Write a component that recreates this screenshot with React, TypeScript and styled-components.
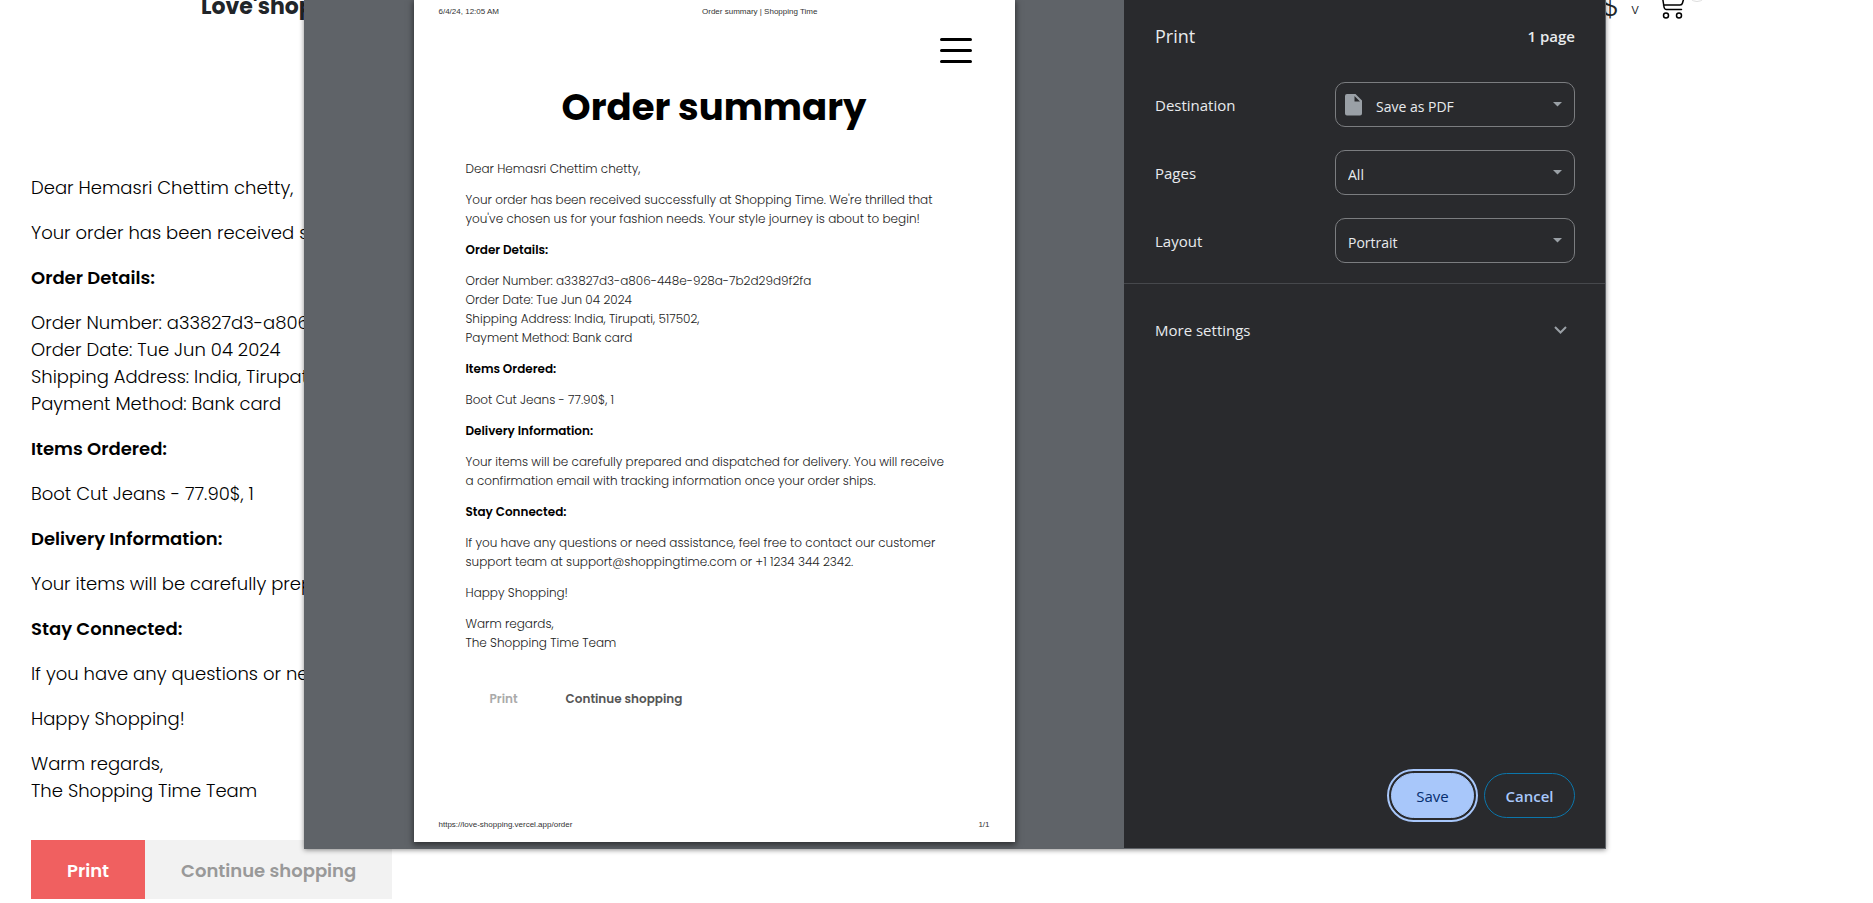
import React from 'react';
import styled, { createGlobalStyle } from 'styled-components';

const GlobalStyle = createGlobalStyle`
  *, *::before, *::after { box-sizing: border-box; }
  body {
    margin: 0;
    background: #fff;
    color: #000;
    font-family: Poppins, Inter, sans-serif;
  }
  h1, h2, p { margin: 0; }
  button, select { font: inherit; cursor: pointer; }
`;

const Page = styled.div`
  position: relative;
  min-height: 100vh;
  overflow: hidden;
`;

/* Shop page behind the dialog */

const SiteHeader = styled.header`
  display: flex;
  align-items: center;
  justify-content: space-between;
  height: 12px;
  padding: 0 186px 0 201px;
`;

const Brand = styled.a`
  color: #212529;
  font-size: 22px;
  font-weight: 700;
  text-decoration: none;
`;

const HeaderTools = styled.div`
  display: flex;
  align-items: center;
`;

const CurrencyButton = styled.button`
  display: flex;
  align-items: center;
  gap: 12px;
  padding: 0;
  border: 0;
  background: none;
  color: #212529;
  font-size: 30px;
  font-weight: 300;
`;

const CurrencyCaret = styled.span`
  padding-top: 6px;
  font-size: 14px;
`;

const CartLink = styled.a`
  position: relative;
  display: flex;
  margin-left: 22px;
  color: #000;
`;

const CartBadge = styled.span`
  position: absolute;
  left: 26px;
  bottom: 17px;
  width: 20px;
  height: 20px;
  border: 1px solid #ddd;
  border-radius: 50%;
`;

const OrderMain = styled.main`
  padding: 162px 31px 4px;
`;

const Letter = styled.div<{ $compact?: boolean }>`
  display: flex;
  flex-direction: column;
  gap: ${(p) => (p.$compact ? 12 : 18)}px;
  font-size: ${(p) => (p.$compact ? 12 : 18)}px;
  line-height: ${(p) => (p.$compact ? 19 : 27)}px;
  font-weight: 300;
  white-space: nowrap;
`;

const Strong = styled.strong`
  font-weight: 600;
`;

const Actions = styled.div`
  display: flex;
  margin-top: 36px;
`;

const ActionButton = styled.button<{ $primary?: boolean }>`
  padding: 17px 36px 15px;
  border: 0;
  background: ${(p) => (p.$primary ? '#f06060' : '#f2f2f2')};
  color: ${(p) => (p.$primary ? '#fff' : '#999')};
  font-size: 18px;
  line-height: 27px;
  font-weight: 600;
`;

/* Print dialog */

const Dialog = styled.section`
  position: absolute;
  top: 0;
  left: 304px;
  right: 267px;
  display: flex;
  background: #292a2d;
  box-shadow: 0 1px 5px rgba(0, 0, 0, 0.45);
`;

const Preview = styled.div`
  flex: 1;
  display: flex;
  justify-content: center;
  padding-bottom: 7px;
  background: #5f6368;
  overflow: hidden;
`;

const Sheet = styled.article`
  flex: 0 1 601px;
  display: flex;
  flex-direction: column;
  padding: 6px 0 11px;
  background: #fff;
  box-shadow: 0 2px 6px 1px rgba(0, 0, 0, 0.5);
`;

const SheetMargin = styled.div`
  display: flex;
  justify-content: space-between;
  padding: 0 25px;
  color: #333;
  font-family: 'Liberation Sans', Arial, sans-serif;
  font-size: 8px;
  line-height: 12px;
`;

const DocTitle = styled.span`
  flex: 1;
  padding-left: 31px;
  text-align: center;
`;

const MenuButton = styled.button`
  align-self: flex-end;
  display: flex;
  margin: 20px 43px 0 0;
  padding: 0;
  border: 0;
  background: none;
  color: #000;
`;

const SheetTitle = styled.h1`
  margin: 17px 0 25px;
  font-size: 37px;
  line-height: 54px;
  font-weight: 700;
  text-align: center;
`;

const SheetBody = styled.div`
  padding: 0 52px;
  color: #222;

  strong { color: #000; }
`;

const SheetActions = styled.div`
  display: flex;
  margin: 37px 0 111px;
`;

const SheetAction = styled.button<{ $muted?: boolean }>`
  padding: 0 24px;
  border: 0;
  background: none;
  color: ${(p) => (p.$muted ? '#aaa' : '#555')};
  font-size: 12px;
  line-height: 19px;
  font-weight: 600;
`;

const Sidebar = styled.aside`
  flex: 0 0 482px;
  display: flex;
  flex-direction: column;
  border-right: 1px solid #5f6368;
  border-bottom: 1px solid #5f6368;
  color: #e8eaed;
  font-family: 'Segoe UI', 'Open Sans', sans-serif;
  font-size: 15px;
`;

const SidebarHeader = styled.header`
  display: flex;
  align-items: center;
  justify-content: space-between;
  padding: 21px 30px 31px 31px;
  line-height: 30px;
`;

const SidebarTitle = styled.h2`
  font-size: 18px;
  font-weight: 400;
`;

const PageCount = styled.span`
  font-weight: 600;
`;

const Settings = styled.form`
  display: flex;
  flex-direction: column;
  gap: 23px;
  padding: 0 30px 20px 31px;
  border-bottom: 1px solid #46484c;
`;

const SettingRow = styled.div`
  display: flex;
  align-items: center;
  justify-content: space-between;
`;

const SelectBox = styled.div`
  position: relative;
  width: 240px;
`;

const Select = styled.select<{ $withIcon?: boolean }>`
  display: block;
  width: 100%;
  height: 45px;
  padding: 3px 30px 0 ${(p) => (p.$withIcon ? 40 : 12)}px;
  border: 1px solid #7b7d80;
  border-radius: 10px;
  appearance: none;
  background: transparent;
  color: #e8eaed;
  font-size: 14px;
`;

const SelectArrow = styled.svg`
  position: absolute;
  right: 13px;
  top: 20px;
  pointer-events: none;
`;

const SelectIcon = styled.svg`
  position: absolute;
  left: 10px;
  top: 12px;
  pointer-events: none;
`;

const MoreSettings = styled.button`
  display: flex;
  align-items: center;
  justify-content: space-between;
  padding: 31px 38px 31px 31px;
  border: 0;
  background: none;
  color: inherit;
  line-height: 30px;
`;

const DialogFooter = styled.footer`
  display: flex;
  justify-content: flex-end;
  gap: 10px;
  margin-top: auto;
  padding: 0 30px 30px;
`;

const PillButton = styled.button<{ $primary?: boolean }>`
  min-width: ${(p) => (p.$primary ? 83 : 91)}px;
  height: 45px;
  border: 1px solid ${(p) => (p.$primary ? '#a8c7fa' : '#0b76ab')};
  border-radius: 23px;
  outline: ${(p) => (p.$primary ? '2px solid #a8c7fa' : 'none')};
  outline-offset: 2px;
  background: ${(p) => (p.$primary ? '#a8c7fa' : 'transparent')};
  color: ${(p) => (p.$primary ? '#062e6f' : '#a8c7fa')};
  font-weight: ${(p) => (p.$primary ? 500 : 600)};
`;

const orderLines = [
  'Order Number: a33827d3-a806-448e-928a-7b2d29d9f2fa',
  'Order Date: Tue Jun 04 2024',
  'Shipping Address: India, Tirupati, 517502,',
  'Payment Method: Bank card',
];

/* The letter is wrapped by hand on the printed sheet and runs on in the page. */
function OrderLetter({ compact = false }: { compact?: boolean }) {
  const wrap = compact ? <br /> : ' ';
  return (
    <Letter $compact={compact}>
      <p>Dear Hemasri Chettim chetty,</p>
      <p>
        Your order has been received successfully at Shopping Time. We're thrilled that{wrap}
        you've chosen us for your fashion needs. Your style journey is about to begin!
      </p>
      <p><Strong>Order Details:</Strong></p>
      <p>
        {orderLines.map((line, i) => (
          <React.Fragment key={line}>
            {i > 0 && <br />}
            {line}
          </React.Fragment>
        ))}
      </p>
      <p><Strong>Items Ordered:</Strong></p>
      <p>Boot Cut Jeans - 77.90$, 1</p>
      <p><Strong>Delivery Information:</Strong></p>
      <p>
        Your items will be carefully prepared and dispatched for delivery. You will receive{wrap}
        a confirmation email with tracking information once your order ships.
      </p>
      <p><Strong>Stay Connected:</Strong></p>
      <p>
        If you have any questions or need assistance, feel free to contact our customer{wrap}
        support team at support@shoppingtime.com or +1 1234 344 2342.
      </p>
      <p>Happy Shopping!</p>
      <p>
        Warm regards,
        <br />
        The Shopping Time Team
      </p>
    </Letter>
  );
}

function Setting({ id, label, value, icon }: { id: string; label: string; value: string; icon?: React.ReactNode }) {
  return (
    <SettingRow>
      <label htmlFor={id}>{label}</label>
      <SelectBox>
        {icon}
        <Select id={id} $withIcon={Boolean(icon)} defaultValue={value}>
          <option>{value}</option>
        </Select>
        <SelectArrow width="9" height="5" viewBox="0 0 9 5" aria-hidden="true">
          <path d="M0 0h9L4.500 4.500z" fill="#9aa0a6" />
        </SelectArrow>
      </SelectBox>
    </SettingRow>
  );
}

const fileIcon = (
  <SelectIcon width="17" height="22" viewBox="0 0 17 22" aria-hidden="true">
    <path d="M2 0h8.500L17 6.500V19.500a2 2 0 0 1-2 2H2a2 2 0 0 1-2-2V2a2 2 0 0 1 2-2zM9.500 2v5.500h5.500z" fill="#9aa0a6" fillRule="evenodd" />
  </SelectIcon>
);

export default function App() {
  return (
    <>
      <GlobalStyle />
      <Page>
        <SiteHeader>
          <Brand href="#">Love'shopping</Brand>
          <HeaderTools>
            <CurrencyButton type="button">
              $<CurrencyCaret>v</CurrencyCaret>
            </CurrencyButton>
            <CartLink href="#" aria-label="Cart">
              <svg width="26" height="26" viewBox="0 0 26 26" fill="none" stroke="currentColor" strokeWidth="1.500" strokeLinecap="round">
                <path d="M0 1h1l2 13q.4 2.500 2.500 2.500h15M2.500 12H19q2 0 2.500-2L23.500 3H1.300" />
                <circle cx="5" cy="22.500" r="2.500" />
                <circle cx="18" cy="22.500" r="2.500" />
              </svg>
              <CartBadge />
            </CartLink>
          </HeaderTools>
        </SiteHeader>

        <OrderMain>
          <OrderLetter />
          <Actions>
            <ActionButton type="button" $primary>Print</ActionButton>
            <ActionButton type="button">Continue shopping</ActionButton>
          </Actions>
        </OrderMain>

        <Dialog role="dialog" aria-label="Print">
          <Preview>
            <Sheet>
              <SheetMargin>
                <span>6/4/24, 12:05 AM</span>
                <DocTitle>Order summary | Shopping Time</DocTitle>
              </SheetMargin>
              <MenuButton type="button" aria-label="Menu">
                <svg width="32" height="25" viewBox="0 0 32 25" stroke="currentColor" strokeWidth="3" strokeLinecap="round">
                  <path d="M1.500 1.500h29M1.500 12.500h29M1.500 23.500h29" />
                </svg>
              </MenuButton>
              <SheetTitle>Order summary</SheetTitle>
              <SheetBody>
                <OrderLetter compact />
                <SheetActions>
                  <SheetAction type="button" $muted>Print</SheetAction>
                  <SheetAction type="button">Continue shopping</SheetAction>
                </SheetActions>
              </SheetBody>
              <SheetMargin>
                <span>https://love-shopping.vercel.app/order</span>
                <span>1/1</span>
              </SheetMargin>
            </Sheet>
          </Preview>

          <Sidebar>
            <SidebarHeader>
              <SidebarTitle>Print</SidebarTitle>
              <PageCount>1 page</PageCount>
            </SidebarHeader>
            <Settings>
              <Setting id="destination" label="Destination" value="Save as PDF" icon={fileIcon} />
              <Setting id="pages" label="Pages" value="All" />
              <Setting id="layout" label="Layout" value="Portrait" />
            </Settings>
            <MoreSettings type="button" aria-expanded="false">
              More settings
              <svg width="13" height="8" viewBox="0 0 13 8" fill="none" stroke="#9aa0a6" strokeWidth="2" aria-hidden="true">
                <path d="M1 1l5.500 5.500L12 1" />
              </svg>
            </MoreSettings>
            <DialogFooter>
              <PillButton type="button" $primary>Save</PillButton>
              <PillButton type="button">Cancel</PillButton>
            </DialogFooter>
          </Sidebar>
        </Dialog>
      </Page>
    </>
  );
}
